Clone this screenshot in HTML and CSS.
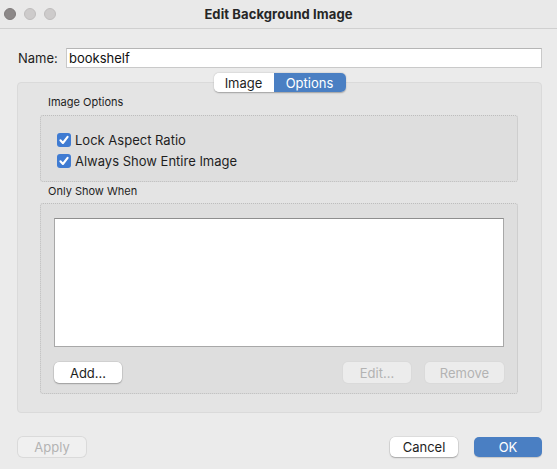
FILE: index.html
```html
<!DOCTYPE html>
<html lang="en">
<head>
<meta charset="utf-8">
<title>Edit Background Image</title>
<link rel="stylesheet" href="styles.css">
</head>
<body>
<div class="window">
  <div class="titlebar">
    <div class="lights">
      <span class="light light-close"></span>
      <span class="light"></span>
      <span class="light"></span>
    </div>
    <div class="title">Edit Background Image</div>
    <div></div>
  </div>
  <div class="content">
    <div class="name-row">
      <label class="name-label">Name:</label>
      <div class="name-input">bookshelf</div>
    </div>
    <div class="segmented">
      <span class="seg">Image</span>
      <span class="seg seg-active">Options</span>
    </div>
    <div class="group">
      <div class="group-label">Image Options</div>
      <div class="inner inner-options">
        <div class="check-row"><span class="checkbox"><svg width="14" height="14" viewBox="0 0 14 14"><path d="M3.4 7.3 L5.9 10 L10.6 3.8" fill="none" stroke="#fff" stroke-width="2.1" stroke-linecap="round" stroke-linejoin="round"/></svg></span>Lock Aspect Ratio</div>
        <div class="check-row"><span class="checkbox"><svg width="14" height="14" viewBox="0 0 14 14"><path d="M3.4 7.3 L5.9 10 L10.6 3.8" fill="none" stroke="#fff" stroke-width="2.1" stroke-linecap="round" stroke-linejoin="round"/></svg></span>Always Show Entire Image</div>
      </div>
      <div class="group-label label-second">Only Show When</div>
      <div class="inner inner-when">
        <div class="list"></div>
        <div class="btn-row">
          <span class="btn">Add...</span>
          <span class="spacer"></span>
          <span class="btn btn-disabled">Edit...</span>
          <span class="btn btn-disabled btn-remove">Remove</span>
        </div>
      </div>
    </div>
    <div class="footer">
      <span class="btn btn-disabled">Apply</span>
      <span class="spacer"></span>
      <span class="btn">Cancel</span>
      <span class="btn btn-primary">OK</span>
    </div>
  </div>
</div>
</body>
</html>
```
FILE: styles.css
```css
* { box-sizing: border-box; }
html, body { margin: 0; padding: 0; }
body {
  width: 557px;
  height: 469px;
  background: #ebebeb;
  font-family: "Inter", "Noto Sans", sans-serif;
  font-size: 13px;
  color: #1e1e1e;
  overflow: hidden;
}
.window { width: 557px; height: 469px; background: #ebebeb; }
.titlebar {
  height: 29px;
  display: grid;
  grid-template-columns: 1fr auto 1fr;
  align-items: center;
  background: #e9e9e9;
  border-bottom: 1px solid #d0d0d0;
}
.lights { display: flex; gap: 8px; padding-left: 4px; align-items: center; }
.light {
  width: 12px; height: 12px; border-radius: 50%;
  background: #cdcbcb;
  border: 1px solid #bfbdbd;
}
.light-close { background: #8c8888; border-color: #7f7b7b; }
.title { font-weight: 700; font-size: 13px; color: #262626; letter-spacing: 0.1px; }
.content { padding: 0 15px 0 17px; }
.name-row { display: flex; align-items: center; margin-top: 19px; height: 20px; }
.name-label { width: 49px; padding-left: 1px; color: #1e1e1e; }
.name-input {
  flex: 1;
  height: 20px;
  background: #fff;
  border: 1px solid #c9c9c9;
  border-top-color: #b5b5b5;
  padding-left: 2px;
  line-height: 18px;
  color: #111;
}
.segmented {
  position: relative;
  z-index: 1;
  display: flex;
  width: 132px;
  height: 19px;
  margin: 5px auto 0;
  border-radius: 5px;
  box-shadow: 0 0.5px 1.5px rgba(0,0,0,0.3);
  overflow: hidden;
}
.seg {
  display: flex; align-items: center; justify-content: center;
  width: 60px; background: #fff; color: #1e1e1e;
}
.seg-active { width: 72px; background: #4a7fc3; color: #fff; }
.group {
  margin-top: -10px;
  height: 331px;
  background: #e4e4e4;
  border: 1px solid #dadada;
  border-radius: 4px;
  padding: 12px 23px 0 22px;
}
.group-label { font-size: 11px; line-height: 14px; padding-left: 8px; color: #1e1e1e; }
.inner {
  background: #dedede;
  border: 1px dotted #bdbdbd;
  border-radius: 3px;
}
.inner-options {
  margin-top: 6px;
  height: 67px;
  padding: 13px 0 0 16px;
}
.check-row { display: flex; align-items: center; height: 21px; gap: 4px; color: #1e1e1e; }
.checkbox {
  width: 14px; height: 14px; border-radius: 3px;
  background: #3f7bd2;
  display: flex;
}
.label-second { margin-top: 2px; }
.inner-when {
  margin-top: 5px;
  height: 191px;
  padding: 14px 13px 0 13px;
}
.list {
  height: 129px;
  background: #fff;
  border: 1px solid #a8a8a8;
  border-top-color: #8e8e8e;
}
.btn-row { display: flex; margin-top: 15px; gap: 14px; }
.spacer { flex: 1; }
.btn {
  display: flex; align-items: center; justify-content: center;
  width: 68px; height: 21px;
  background: #fff;
  border-radius: 5px;
  box-shadow: 0 0 0 0.5px rgba(0,0,0,0.12), 0 1px 1.5px rgba(0,0,0,0.25);
  color: #1e1e1e;
}
.btn-disabled {
  background: #ececec;
  color: #b3b3b3;
  box-shadow: 0 0 0 1px #dadada;
}
.btn-remove { width: 79px; }
.footer { display: flex; margin-top: 24px; gap: 16px; padding-left: 1px; }
.footer .btn { height: 20px; }
.footer .btn-disabled { background: #f0f0f0; }
.btn-primary { background: #4a7fc3; color: #fff; box-shadow: 0 1px 1px rgba(0,0,0,0.15); }
```
